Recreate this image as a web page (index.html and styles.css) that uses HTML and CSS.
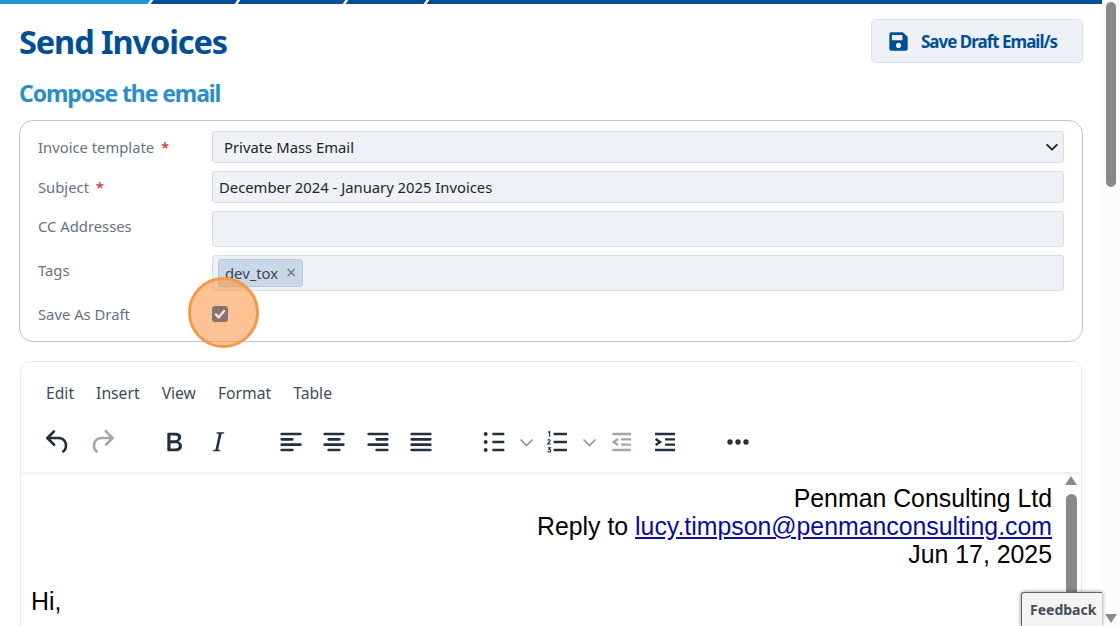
FILE: index.html
```html
<!DOCTYPE html>
<html lang="en">
<head>
<meta charset="utf-8">
<title>Send Invoices</title>
<link rel="stylesheet" href="styles.css">
</head>
<body>
<div class="page">
  <div class="progress">
    <span class="seg seg-1"></span><span class="seg seg-2"></span><span class="seg seg-3"></span><span class="seg seg-4"></span><span class="seg seg-5"></span>
  </div>
  <main class="main">
    <header class="head">
      <h1 class="title">Send Invoices</h1>
      <button class="save" type="button">
        <svg class="save-icon" viewBox="0 0 448 512"><path fill="currentColor" d="M433.9 129.9l-83.9-83.9A48 48 0 0 0 316.1 32H48C21.5 32 0 53.5 0 80v352c0 26.5 21.5 48 48 48h352c26.5 0 48-21.5 48-48V163.900a48 48 0 0 0-14.1-34zM224 416c-35.3 0-64-28.7-64-64s28.7-64 64-64 64 28.7 64 64-28.700 64-64 64zm96-304.500V212c0 6.600-5.400 12-12 12H76c-6.600 0-12-5.400-12-12V108c0-6.600 5.400-12 12-12h228.500c3.200 0 6.200 1.300 8.500 3.500l3.500 3.500c2.200 2.200 3.500 5.300 3.500 8.500z"/></svg>
        <span>Save Draft Email/s</span>
      </button>
    </header>
    <h2 class="subtitle">Compose the email</h2>

    <section class="form-card">
      <div class="row">
        <label class="label">Invoice template <em class="req">*</em></label>
        <select class="control select"><option>Private Mass Email</option></select>
      </div>
      <div class="row">
        <label class="label">Subject <em class="req">*</em></label>
        <input class="control input" type="text" value="December 2024 - January 2025 Invoices">
      </div>
      <div class="row">
        <label class="label label-up">CC Addresses</label>
        <div class="control tall"></div>
      </div>
      <div class="row">
        <label class="label label-up">Tags</label>
        <div class="control tall tags"><span class="tag">dev_tox <span class="tag-x">×</span></span></div>
      </div>
      <div class="row row-check">
        <label class="label">Save As Draft</label>
        <input class="check" type="checkbox" checked>
      </div>
      <span class="spot"></span>
    </section>

    <section class="editor">
      <nav class="menubar">
        <span>Edit</span><span>Insert</span><span>View</span><span>Format</span><span>Table</span>
      </nav>
      <div class="toolbar">
        <div class="group">
          <span class="btn"><svg viewBox="0 0 24 24"><path d="M6.4 8H12c3.7 0 6.2 2 6.8 5.1.6 2.7-.4 5.6-2.3 6.8a1 1 0 0 1-1-1.8c1.1-.6 1.8-2.7 1.4-4.6-.5-2.1-2.1-3.5-4.9-3.500H6.4l3.3 3.3a1 1 0 1 1-1.4 1.4l-5-5a1 1 0 0 1 0-1.4l5-5a1 1 0 0 1 1.4 1.4L6.4 8Z"/></svg></span>
          <span class="btn off"><svg viewBox="0 0 24 24"><path d="M17.6 10H12c-2.8 0-4.4 1.4-4.9 3.5-.4 2 .3 4 1.4 4.6a1 1 0 1 1-1 1.8c-2-1.2-2.9-4.1-2.3-6.8.6-3 3-5.1 6.8-5.100h5.600l-3.300-3.300a1 1 0 1 1 1.400-1.400l5 5a1 1 0 0 1 0 1.400l-5 5a1 1 0 0 1-1.400-1.400l3.300-3.300Z"/></svg></span>
        </div>
        <div class="group">
          <span class="btn"><svg viewBox="0 0 24 24"><path d="M7.8 19c-.3 0-.5 0-.6-.2l-.2-.5V5.7c0-.2 0-.4.2-.5l.6-.2h5c1.5 0 2.7.3 3.5 1 .7.6 1.1 1.4 1.1 2.5a3 3 0 0 1-.6 1.9c-.4.6-1 1-1.6 1.2.4.1.9.3 1.3.6s.8.7 1 1.2c.4.4.5 1 .5 1.6 0 1.3-.4 2.3-1.3 3-.8.7-2.1 1-3.8 1H7.8Zm5-8.3c.6 0 1.2-.1 1.6-.5.4-.3.6-.7.6-1.3 0-1.1-.8-1.7-2.3-1.7H9.3v3.5h3.4Zm.5 6c.7 0 1.3-.1 1.7-.4.4-.4.6-.9.6-1.5s-.2-1-.7-1.4c-.4-.3-1-.4-2-.4H9.4v3.8h4Z"/></svg></span>
          <span class="btn"><svg viewBox="0 0 24 24"><path d="m16.7 4.7-.1.9h-.3c-.6 0-1 0-1.4.3-.3.3-.4.6-.5 1.1l-2.1 9.8v.6c0 .5.4.8 1.4.8h.2l-.2.8H8l.2-.8h.2c1.1 0 1.8-.5 2-1.5l2-9.8.1-.5c0-.6-.4-.8-1.4-.8h-.3l.2-.9h5.8Z"/></svg></span>
        </div>
        <div class="group group-align">
          <span class="btn"><svg viewBox="0 0 24 24"><path d="M5 5h14a1 1 0 0 1 0 2H5a1 1 0 1 1 0-2Zm0 4h8a1 1 0 0 1 0 2H5a1 1 0 1 1 0-2Zm0 8h8a1 1 0 0 1 0 2H5a1 1 0 0 1 0-2Zm0-4h14a1 1 0 0 1 0 2H5a1 1 0 0 1 0-2Z"/></svg></span>
          <span class="btn"><svg viewBox="0 0 24 24"><path d="M5 5h14a1 1 0 0 1 0 2H5a1 1 0 1 1 0-2Zm3 4h8a1 1 0 0 1 0 2H8a1 1 0 1 1 0-2Zm0 8h8a1 1 0 0 1 0 2H8a1 1 0 0 1 0-2Zm-3-4h14a1 1 0 0 1 0 2H5a1 1 0 0 1 0-2Z"/></svg></span>
          <span class="btn"><svg viewBox="0 0 24 24"><path d="M5 5h14a1 1 0 0 1 0 2H5a1 1 0 1 1 0-2Zm6 4h8a1 1 0 0 1 0 2h-8a1 1 0 0 1 0-2Zm0 8h8a1 1 0 0 1 0 2h-8a1 1 0 0 1 0-2Zm-6-4h14a1 1 0 0 1 0 2H5a1 1 0 0 1 0-2Z"/></svg></span>
          <span class="btn"><svg viewBox="0 0 24 24"><path d="M5 5h14a1 1 0 0 1 0 2H5a1 1 0 1 1 0-2Zm0 4h14a1 1 0 0 1 0 2H5a1 1 0 1 1 0-2Zm0 4h14a1 1 0 0 1 0 2H5a1 1 0 0 1 0-2Zm0 4h14a1 1 0 0 1 0 2H5a1 1 0 0 1 0-2Z"/></svg></span>
        </div>
        <div class="group group-list">
          <span class="btn"><svg viewBox="0 0 24 24"><path class="st" d="M10 6h9M10 12h9M10 18h9"/><circle cx="5" cy="6" r="1.500"/><circle cx="5" cy="12" r="1.500"/><circle cx="5" cy="18" r="1.500"/></svg></span>
          <span class="caret"><svg viewBox="0 0 10 10"><path d="M1 3l4 4 4-4"/></svg></span>
          <span class="btn"><svg viewBox="0 0 24 24"><path class="st" d="M9.500 6h10M9.500 12h10M9.500 18h10"/><path class="st thin" d="M5.300 4.700l1.100-.5v3.800M5 10.800c.2-.5.8-.7 1.300-.5.700.3.700 1 .1 1.500L5 13.500h2.200M5 16.300h2l-1 1.200c.9 0 1.300.4 1.300 1s-.6 1-1.200 1c-.4 0-.8-.1-1.100-.4"/></svg></span>
          <span class="caret caret-wide"><svg viewBox="0 0 10 10"><path d="M1 3l4 4 4-4"/></svg></span>
          <span class="btn off"><svg viewBox="0 0 24 24"><path class="st" d="M5.500 6h14M12 10h7.500M12 14h7.500M5.500 18h14"/><path class="st" d="M9.800 9.800 6.500 12l3.300 2.200"/></svg></span>
          <span class="btn"><svg viewBox="0 0 24 24"><path class="st" d="M4.500 6h15M12 10h7.500M12 14h7.500M4.500 18h15"/><path class="st" d="M5 9.800 8.300 12 5 14.200"/></svg></span>
        </div>
        <div class="group group-more">
          <span class="btn"><svg viewBox="0 0 24 24"><circle cx="6" cy="12" r="2"/><circle cx="12" cy="12" r="2"/><circle cx="18" cy="12" r="2"/></svg></span>
        </div>
      </div>
      <div class="doc">
        <div class="doc-body">
          <p class="addr">Penman Consulting Ltd<br>Reply to <a class="link" href="#">lucy.timpson@penmanconsulting.com</a><br>Jun 17, 2025</p>
          <p class="greet">Hi,</p>
        </div>
        <div class="doc-scroll">
          <span class="arrow-up"></span>
          <span class="doc-thumb"></span>
        </div>
      </div>
    </section>
  </main>
  <div class="page-scroll"><span class="page-thumb"></span><span class="arrow-down"></span></div>
  <div class="feedback">Feedback</div>
</div>
</body>
</html>
```
FILE: styles.css
```css
* { box-sizing: border-box; }
html, body { margin: 0; padding: 0; height: 100%; overflow: hidden; background: #fff; }
body { font-family: "Noto Sans", "Open Sans", sans-serif; color: #212529; }

.page { position: relative; width: 1120px; height: 626px; overflow: hidden; }

.progress { display: flex; gap: 3px; width: 1102px; height: 4px; overflow: hidden; }
.seg { display: block; height: 4px; background: #034f96; transform: skewX(-35deg); flex: none; }
.seg-1 { width: 155px; margin-left: -6px; background: #1f93d6; }
.seg-2 { width: 84px; }
.seg-3 { width: 105px; }
.seg-4 { width: 78px; }
.seg-5 { width: 680px; }

.main { width: 1102px; padding: 15px 19px 0 19px; }

.head { display: flex; justify-content: space-between; align-items: flex-start; height: 58px; }
.title { margin: 1px 0 0; font-size: 32.5px; line-height: 44px; font-weight: 700; letter-spacing: -1.1px; color: #034f96; }
.save { display: flex; align-items: center; gap: 13px; width: 212px; height: 44px; padding: 0 0 0 17px; background: #edf1f7; border: 1px solid #d9dfe8; border-radius: 5px; color: #034f96; font-family: inherit; font-size: 17px; font-weight: 700; letter-spacing: -1px; }
.save-icon { width: 19px; height: 21px; }

.subtitle { margin: 0; font-size: 23px; line-height: 30px; font-weight: 700; letter-spacing: -1.1px; color: #2a8fc9; height: 43px; padding-top: 1px; }

.form-card { position: relative; height: 222px; border: 1px solid #bcc3cb; border-radius: 14px; padding: 10px 18px 0 18px; display: flex; flex-direction: column; gap: 8px; }
.row { display: flex; align-items: center; }
.label { flex: none; width: 174px; font-size: 14.8px; color: #66727f; }
.label-up { align-self: flex-start; padding-top: 5px; }
.req { font-style: normal; color: #c0242c; margin-left: 3px; }
.control { flex: 1; height: 32px; background: #eef1f6; border: 1px solid #d9dee5; border-radius: 3px; font-family: inherit; font-size: 14.8px; color: #212529; }
.select { padding-left: 11px; appearance: none; background-image: url("data:image/svg+xml,%3csvg xmlns='http://www.w3.org/2000/svg' viewBox='0 0 16 16'%3e%3cpath fill='none' stroke='%23212529' stroke-linecap='round' stroke-linejoin='round' stroke-width='2.200' d='m2.500 5.500 5.500 5.500 5.500-5.500'/%3e%3c/svg%3e"); background-repeat: no-repeat; background-position: right 4px center; background-size: 14px 14px; }
.input { padding: 0 6px; outline: none; }
.tall { height: 36px; }
.tags { display: flex; align-items: center; padding-left: 5px; }
.tag { display: inline-block; height: 28px; line-height: 24px; padding: 0 6px; background: #c9d8e6; border: 1px solid #b8c9d9; border-radius: 3px; font-size: 14.8px; color: #3b4651; }
.tag-x { margin-left: 4px; font-size: 18px; color: #6d7885; }
.row-check { height: 30px; }
.check { position: relative; z-index: 1; flex: none; width: 16px; height: 16px; margin: 0; appearance: none; border-radius: 3px; background-color: #87736f; background-image: url("data:image/svg+xml,%3csvg xmlns='http://www.w3.org/2000/svg' viewBox='0 0 16 16'%3e%3cpath fill='none' stroke='%23fbe6d4' stroke-linecap='round' stroke-linejoin='round' stroke-width='2.500' d='m4 8.500 2.800 2.800L12 5'/%3e%3c/svg%3e"); }
.spot { position: absolute; left: 168px; top: 156px; width: 71px; height: 71px; border-radius: 50%; background: rgba(251, 146, 60, .55); border: 3px solid #f19a4b; }

.editor { height: 300px; margin: 19px 1px 0; border: 1px solid #e9eaec; border-radius: 10px; overflow: hidden; }
.menubar { display: flex; gap: 22px; height: 44px; padding: 20px 0 0 25px; font-size: 15.7px; line-height: 22px; color: #3f4b57; }
.toolbar { display: flex; gap: 29px; height: 66px; padding: 20px 0 0 15.5px; box-shadow: 0 2px 3px rgba(0, 0, 0, .08); position: relative; }
.group { display: flex; align-items: center; height: 32px; }
.group-align { margin-left: .5px; }
.group-list { margin-left: 1.5px; }
.group-more { margin-left: 1px; }
.btn { display: flex; justify-content: center; flex: none; width: 43.5px; }
.btn svg { width: 32px; height: 32px; fill: #222f3e; }
.btn.off svg { fill: #a2a7ad; }
.st { fill: none; stroke: #222f3e; stroke-width: 1.8; }
.st.thin { stroke-width: .9; }
.btn.off .st { fill: none; stroke: #a2a7ad; }
.caret { display: flex; justify-content: center; flex: none; width: 19px; margin-left: -.5px; }
.caret-wide { width: 21px; }
.caret svg { width: 15px; height: 15px; fill: none; stroke: #8b939b; stroke-width: 1.1; }

.doc { display: flex; height: 200px; background: #fff; }
.doc-body { width: 1031px; padding: 13px 0 0 10px; font-family: "Liberation Sans", Arial, sans-serif; font-size: 24.85px; line-height: 28px; color: #000; }
.addr { margin: 0; text-align: right; }
.link { color: #0b0b9c; }
.greet { margin: 19px 0 0; }
.doc-scroll { display: flex; flex-direction: column; align-items: center; width: 12px; margin-left: 13px; padding-top: 4px; }
.arrow-up { width: 0; height: 0; border-left: 6px solid transparent; border-right: 6px solid transparent; border-bottom: 9px solid #8a8a8a; }
.doc-thumb { width: 11px; height: 110px; margin-top: 9px; background: #8a8a8a; border-radius: 6px; }

.page-scroll { position: absolute; left: 1102px; top: 0; width: 18px; height: 626px; background: #fcfcfc; }
.page-thumb { position: absolute; left: 4px; top: 2px; width: 10px; height: 185px; border-radius: 5px; background: #8a8a8a; }
.arrow-down { position: absolute; left: 3px; top: 614px; width: 0; height: 0; border-left: 6px solid transparent; border-right: 6px solid transparent; border-top: 9px solid #8a8a8a; }
.feedback { position: absolute; left: 1021px; top: 592px; width: 81px; height: 34px; padding: 7px 0 0 8px; background: #f4f4f4; border: 1px solid #666; border-right: 0; border-bottom: 0; border-radius: 3px 0 0 0; box-shadow: 0 0 4px rgba(0, 0, 0, .45); font-size: 14px; line-height: 20px; font-weight: 700; color: #444c54; }
```
